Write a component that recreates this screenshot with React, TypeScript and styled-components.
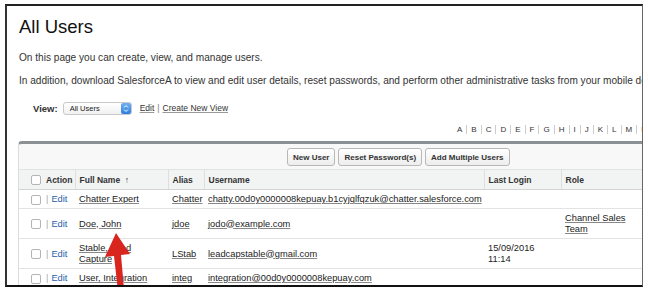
import React from "react";
import styled, { createGlobalStyle } from "styled-components";

const Global = createGlobalStyle`
  html, body { margin: 0; padding: 0; background: #fff; }
  body { font-family: "Liberation Sans", Arial, sans-serif; color: #222; }
`;

const Frame = styled.div`
  position: relative;
  box-sizing: border-box;
  margin: 4px 0 0 5px;
  width: 638px;
  height: 283px;
  border-top: 2px solid #222;
  border-left: 2px solid #333;
  border-right: 1px solid #666;
  border-bottom: 2px solid #111;
  overflow: hidden;
  background: #fff;
`;

const Page = styled.div`
  padding: 9px 0 0 12px;
  white-space: nowrap;
`;

const Title = styled.h1`
  margin: 0;
  font-size: 18.5px;
  line-height: 24px;
  font-weight: normal;
  color: #111;
`;

const Para = styled.p<{ $gap: number }>`
  margin: ${(p) => p.$gap}px 0 0;
  font-size: 10.1px;
  line-height: 14px;
  color: #333;
`;

const ViewRow = styled.div`
  margin: 12px 0 0 14px;
  height: 16px;
  display: flex;
  align-items: center;
  gap: 5px;
`;

const ViewLabel = styled.span`
  font-weight: bold;
  font-size: 9.5px;
  color: #333;
`;

const Select = styled.div`
  box-sizing: border-box;
  width: 69px;
  height: 13px;
  border: 1px solid #c9c9c9;
  border-radius: 3px;
  background: linear-gradient(#fff, #f1f1f1);
  display: flex;
  align-items: center;
  justify-content: space-between;
  padding-left: 6px;
  font-size: 7.5px;
  color: #222;
`;

const Stepper = styled.span`
  width: 10px;
  height: 11px;
  border-radius: 2px;
  background: linear-gradient(#6fb0f2, #2f7fe0);
  display: flex;
  align-items: center;
  justify-content: center;
`;

const ViewLinks = styled.span`
  margin-left: 3px;
  font-size: 8.5px;
  color: #777;
  display: flex;
  gap: 3px;
`;

const PlainLink = styled.a`
  color: #333;
  text-decoration: underline;
  text-decoration-color: #999;
`;

const AlphaRow = styled.div`
  margin: 7px 0 0 434px;
  height: 12px;
  display: flex;
  align-items: center;
  font-size: 8px;
  color: #333;
`;

const Letter = styled.span`
  padding: 0 4px;
  border-left: 1px solid #ccc;
  line-height: 9px;
  &:first-child {
    border-left: none;
  }
`;

const Panel = styled.div`
  margin: 6px 0 0 -1px;
  width: 720px;
  background: #f8f8f8;
  border-top: 3px solid #8b9095;
  border-left: 1px solid #dcdcdc;
  border-top-left-radius: 4px;
`;

const ButtonBar = styled.div`
  height: 25px;
  display: flex;
  align-items: flex-start;
  gap: 3px;
  padding: 4px 0 0 268px;
  box-sizing: border-box;
`;

const Button = styled.button`
  box-sizing: border-box;
  height: 18px;
  padding: 0 5px;
  border: 1px solid #b8b8b8;
  border-radius: 3px;
  background: linear-gradient(#fff, #ededed);
  font-family: "Liberation Sans", Arial, sans-serif;
  font-weight: bold;
  font-size: 8px;
  color: #333;
`;

const Table = styled.table`
  border-collapse: collapse;
  table-layout: fixed;
  width: 719px;
  background: #fff;
`;

const HeadCell = styled.th<{ $sep?: boolean }>`
  height: 20px;
  box-sizing: border-box;
  padding: 0 4px;
  text-align: left;
  font-size: 8.5px;
  font-weight: bold;
  color: #333;
  background: #f2f3f3;
  border-top: 1px solid #e0e3e5;
  border-bottom: 1px solid #d4d4d4;
  border-left: ${(p) => (p.$sep ? "1px solid #dedede" : "none")};
  white-space: nowrap;
`;

const Cell = styled.td`
  padding: 4px 4px 3px;
  height: 11px;
  font-size: 9.3px;
  line-height: 11px;
  color: #222;
  border-bottom: 1px solid #e3e3e3;
  vertical-align: middle;
  white-space: normal;
  overflow: hidden;
`;

const CheckCell = styled(Cell)`
  padding: 4px 0 3px 12px;
`;

const HeadCheckCell = styled(HeadCell)`
  padding: 0 0 0 12px;
`;

const Box = styled.span`
  display: block;
  box-sizing: border-box;
  width: 10px;
  height: 10px;
  border: 1px solid #b4b4b4;
  border-radius: 2px;
  background: #fff;
`;

const Link = styled.a`
  color: #222;
  text-decoration: underline;
  text-decoration-color: #888;
`;

const Pipe = styled.span`
  color: #aaa;
  margin-right: 3px;
`;

const EditLink = styled.a`
  color: #1f5fa8;
  text-decoration: none;
`;

const Arrow = styled.svg`
  position: absolute;
  left: 90px;
  top: 224px;
  pointer-events: none;
`;

type Row = {
  name: string;
  alias: string;
  user: string;
  last?: string;
  role?: string;
};

const rows: Row[] = [
  {
    name: "Chatter Expert",
    alias: "Chatter",
    user: "chatty.00d0y0000008kepuay.b1cyjqlfqzuk@chatter.salesforce.com",
  },
  { name: "Doe, John", alias: "jdoe", user: "jodo@example.com", role: "Channel Sales Team" },
  {
    name: "Stable, Lead Capture",
    alias: "LStab",
    user: "leadcapstable@gmail.com",
    last: "15/09/2016 11:14",
  },
  { name: "User, Integration", alias: "integ", user: "integration@00d0y0000008kepuay.com" },
];

const letters = "ABCDEFGHIJKLMN".split("");

export default function App() {
  return (
    <>
      <Global />
      <Frame>
        <Page>
          <Title>All Users</Title>
          <Para $gap={12}>On this page you can create, view, and manage users.</Para>
          <Para $gap={9}>
            In addition, download SalesforceA to view and edit user details, reset passwords, and
            perform other administrative tasks from your mobile device.
          </Para>
          <ViewRow>
            <ViewLabel>View:</ViewLabel>
            <Select>
              All Users
              <Stepper>
                <svg width="6" height="9" viewBox="0 0 6 9">
                  <path d="M1 3.5 L3 1.5 L5 3.5 M1 5.5 L3 7.5 L5 5.5" stroke="#fff" strokeWidth="1" fill="none" />
                </svg>
              </Stepper>
            </Select>
            <ViewLinks>
              <PlainLink>Edit</PlainLink>|<PlainLink>Create New View</PlainLink>
            </ViewLinks>
          </ViewRow>
          <AlphaRow>
            {letters.map((l) => (
              <Letter key={l}>{l}</Letter>
            ))}
          </AlphaRow>
          <Panel>
            <ButtonBar>
              <Button>New User</Button>
              <Button>Reset Password(s)</Button>
              <Button>Add Multiple Users</Button>
            </ButtonBar>
            <Table>
              <colgroup>
                <col style={{ width: 25 }} />
                <col style={{ width: 31 }} />
                <col style={{ width: 93 }} />
                <col style={{ width: 36 }} />
                <col style={{ width: 280 }} />
                <col style={{ width: 77 }} />
                <col style={{ width: 82 }} />
                <col style={{ width: 95 }} />
              </colgroup>
              <thead>
                <tr>
                  <HeadCheckCell>
                    <Box />
                  </HeadCheckCell>
                  <HeadCell style={{ paddingLeft: 2 }}>Action</HeadCell>
                  <HeadCell $sep>Full Name &nbsp;↑</HeadCell>
                  <HeadCell $sep>Alias</HeadCell>
                  <HeadCell $sep>Username</HeadCell>
                  <HeadCell $sep>Last Login</HeadCell>
                  <HeadCell $sep>Role</HeadCell>
                  <HeadCell $sep>Active</HeadCell>
                </tr>
              </thead>
              <tbody>
                {rows.map((r) => (
                  <tr key={r.name}>
                    <CheckCell>
                      <Box />
                    </CheckCell>
                    <Cell style={{ paddingLeft: 2, paddingRight: 0 }}>
                      <Pipe>|</Pipe>
                      <EditLink>Edit</EditLink>
                    </Cell>
                    <Cell>
                      <Link>{r.name}</Link>
                    </Cell>
                    <Cell>
                      <Link>{r.alias}</Link>
                    </Cell>
                    <Cell style={{ whiteSpace: "nowrap" }}>
                      <Link>{r.user}</Link>
                    </Cell>
                    <Cell>{r.last}</Cell>
                    <Cell>{r.role && <Link>{r.role}</Link>}</Cell>
                    <Cell />
                  </tr>
                ))}
              </tbody>
            </Table>
          </Panel>
        </Page>
        <Arrow width="50" height="70" viewBox="0 0 50 70">
          <path d="M19 3 L8 27 L17 26 L22 70 L28 70 L24 25 L33 24 Z" fill="#d8261e" />
        </Arrow>
      </Frame>
    </>
  );
}
